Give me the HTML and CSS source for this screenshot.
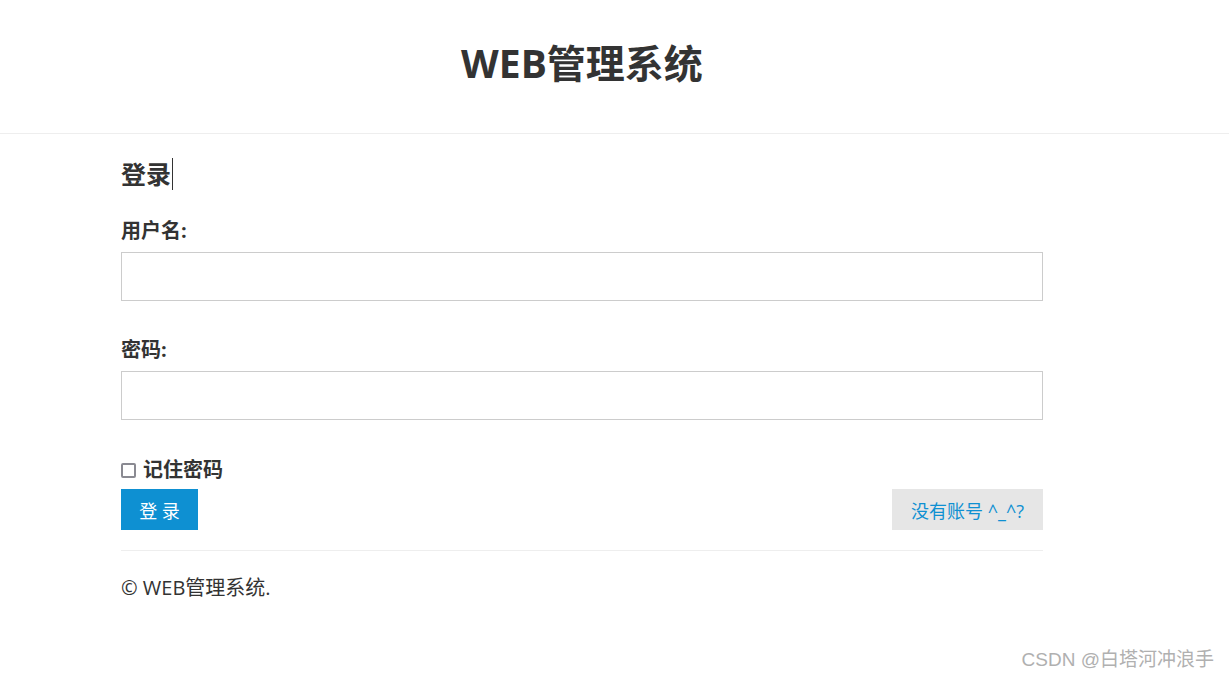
FILE: index.html
```html
<!DOCTYPE html>
<html lang="zh">
<head>
<meta charset="utf-8">
<title>WEB管理系统</title>
<link rel="stylesheet" href="styles.css">
</head>
<body>
<header class="site-header">
  <div class="container">
    <h1 class="site-title">WEB管理系统</h1>
  </div>
</header>
<main class="container">
  <h2 class="login-title">登录<span class="caret"></span></h2>
  <form class="login-form">
    <div class="field">
      <label class="field-label">用户名:</label>
      <input class="field-input" type="text">
    </div>
    <div class="field">
      <label class="field-label">密码:</label>
      <input class="field-input" type="password">
    </div>
    <label class="remember"><span class="checkbox"></span>记住密码</label>
    <div class="actions">
      <button type="button" class="btn-primary">登 录</button>
      <button type="button" class="btn-secondary">没有账号 ^_^?</button>
    </div>
  </form>
  <hr class="divider">
  <footer class="footer">© WEB管理系统.</footer>
</main>
<div class="watermark">CSDN @白塔河冲浪手</div>
</body>
</html>
```
FILE: styles.css
```css
* { box-sizing: border-box; }
html, body { margin: 0; padding: 0; background: #fff; }
body {
  font-family: "Open Sans", "Noto Sans CJK SC", sans-serif;
  color: #333;
  width: 1229px;
  height: 677px;
  overflow: hidden;
  position: relative;
}
.container {
  width: 922px;
  margin-left: 121px;
}
.site-header {
  height: 134px;
  border-bottom: 1px solid #eee;
}
.site-title {
  margin: 0;
  padding-top: 36px;
  text-align: center;
  font-size: 39px;
  font-weight: 700;
  line-height: 54px;
  color: #333;
}
.login-title {
  margin: 0;
  padding-top: 23px;
  font-size: 25px;
  font-weight: 700;
  line-height: 34px;
  display: flex;
  align-items: center;
}
.caret {
  display: inline-block;
  width: 1px;
  height: 32px;
  background: #333;
  margin-left: 1px;
}
.login-form { margin-top: 28px; }
.field { display: flex; flex-direction: column; margin-bottom: 37px; }
.field-label {
  font-size: 20px;
  font-weight: 700;
  line-height: 24px;
  margin-bottom: 9px;
}
.field-input {
  height: 49px;
  width: 100%;
  border: 1px solid #ccc;
  border-radius: 0;
  outline: none;
  margin: 0;
}
.remember {
  display: flex;
  align-items: center;
  font-size: 20px;
  font-weight: 700;
  line-height: 26px;
  margin-top: 24px;
}
.checkbox {
  width: 15px;
  height: 15px;
  border: 2px solid #8a8a92;
  border-radius: 2px;
  margin-right: 7px;
}
.actions {
  display: flex;
  justify-content: space-between;
  margin-top: 6px;
}
.btn-primary, .btn-secondary {
  height: 41px;
  border: none;
  border-radius: 0;
  font-family: inherit;
  font-size: 18px;
  padding: 0;
  cursor: pointer;
}
.btn-primary {
  width: 77px;
  background: #0e90d2;
  color: #fff;
}
.btn-secondary {
  width: 151px;
  background: #e6e6e6;
  color: #0e90d2;
  font-size: 18px;
}
.divider {
  border: none;
  border-top: 1px solid #eee;
  margin: 20px 0 0;
}
.footer {
  font-size: 20px;
  line-height: 26px;
  padding-top: 24px;
}
.watermark {
  position: absolute;
  right: 15px;
  bottom: 6px;
  font-family: "Liberation Sans", "Noto Sans CJK SC", sans-serif;
  font-size: 19px;
  color: #b0b0b0;
}
```
